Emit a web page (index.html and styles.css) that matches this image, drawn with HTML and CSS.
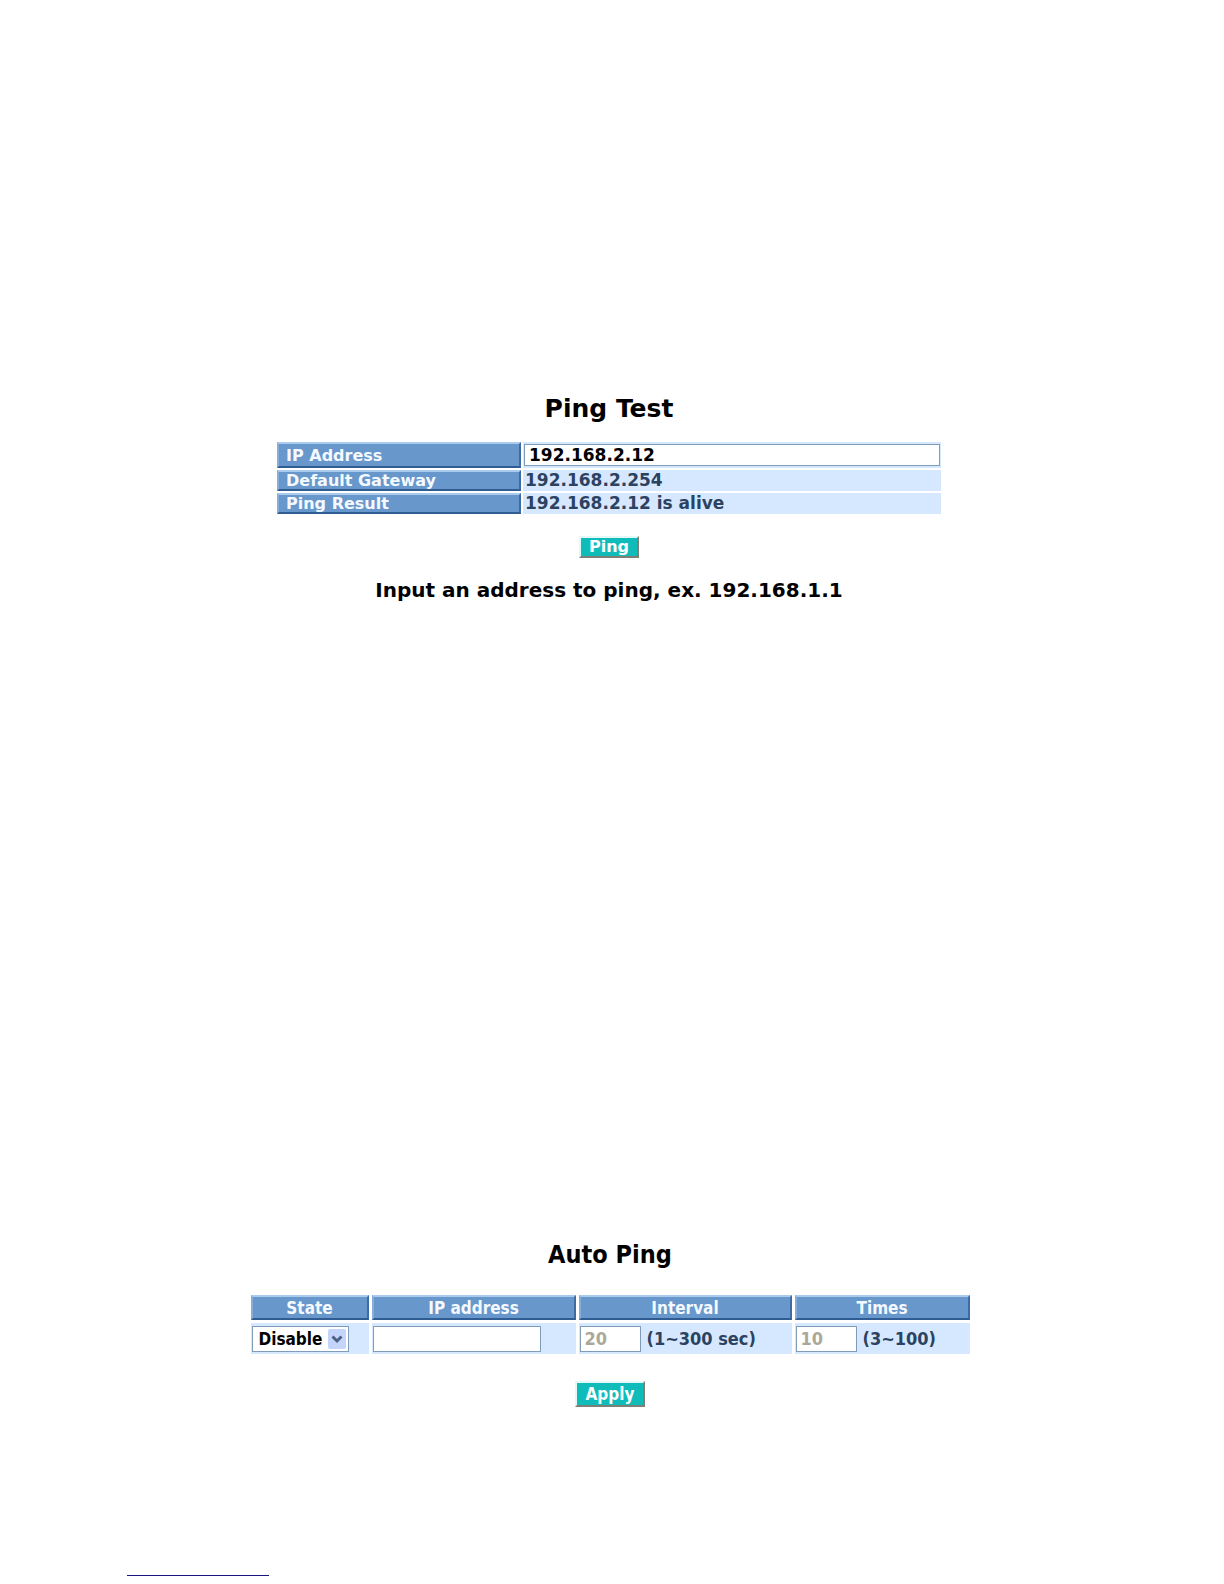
FILE: index.html
```
<!DOCTYPE html>
<html lang="en">
<head>
    <meta charset="UTF-8">
    <meta name="viewport" content="width=device-width, initial-scale=1.0">
    <title>Ping Test</title>
    <link rel="stylesheet" href="styles.css">
</head>
<body>
    <main>
        <form class="ping-test">
            <h1>Ping Test</h1>
            <table class="ping-table">
                <tr class="input-row">
                    <th scope="row"><label for="pingAddress">IP Address</label></th>
                    <td><input type="text" id="pingAddress" value="192.168.2.12"></td>
                </tr>
                <tr>
                    <th scope="row">Default Gateway</th>
                    <td>192.168.2.254</td>
                </tr>
                <tr>
                    <th scope="row">Ping Result</th>
                    <td>192.168.2.12 is alive</td>
                </tr>
            </table>
            <button type="button">Ping</button>
            <p class="hint">Input an address to ping, ex. 192.168.1.1</p>
        </form>

        <form class="auto-ping">
            <h2>Auto Ping</h2>
            <table class="auto-table">
                <thead>
                    <tr>
                        <th scope="col" class="col-state"><label for="state">State</label></th>
                        <th scope="col" class="col-address"><label for="autoAddress">IP address</label></th>
                        <th scope="col" class="col-interval"><label for="interval">Interval</label></th>
                        <th scope="col"><label for="times">Times</label></th>
                    </tr>
                </thead>
                <tbody>
                    <tr>
                        <td>
                            <div class="select-box">
                                <select id="state">
                                    <option>Disable</option>
                                    <option>Enable</option>
                                </select>
                                <svg class="arrow" viewBox="0 0 18 20" aria-hidden="true">
                                    <rect width="18" height="20" rx="2" fill="#c5d4fa"/>
                                    <path d="M4.500 7.500l4.500 4.500 4.500-4.500" fill="none" stroke="#4d6185" stroke-width="3"/>
                                </svg>
                            </div>
                        </td>
                        <td><input type="text" id="autoAddress" class="address"></td>
                        <td>
                            <div class="field">
                                <input type="text" id="interval" value="20" disabled>
                                <span>(1~300 sec)</span>
                            </div>
                        </td>
                        <td>
                            <div class="field">
                                <input type="text" id="times" value="10" disabled>
                                <span>(3~100)</span>
                            </div>
                        </td>
                    </tr>
                </tbody>
            </table>
            <button type="button">Apply</button>
        </form>
    </main>
    <footer>
        <hr>
    </footer>
</body>
</html>
```
FILE: styles.css
```
* {
    box-sizing: border-box;
}
body {
    margin: 0;
    padding: 395px 6px 0 0;
    background-color: #fff;
    color: #000;
    font-family: "DejaVu Sans", Verdana, sans-serif;
    font-weight: bold;
}
form {
    display: flex;
    flex-direction: column;
    align-items: center;
}
h1, h2 {
    margin: 0;
    font-size: 25px;
    line-height: 28px;
}
table {
    width: 100%;
    table-layout: fixed;
    border-collapse: separate;
}
th {
    padding: 0;
    background-color: #6797cb;
    border: 2px solid;
    border-color: #a9cbee #3d6ca5 #2f5c93 #86aedb;
    color: #f4f9ff;
}
td {
    padding: 0 2px;
    background-color: #d6e8ff;
    color: #2b4261;
}
input, select {
    display: block;
    margin: 0;
    border: 1px solid #7f9db9;
    border-radius: 0;
    background-color: #fff;
    color: #000;
    font: inherit;
}
input:disabled {
    color: #aca899;
}
button {
    padding: 0;
    background-color: #0fbcba;
    border: 2px solid;
    border-color: #e4f8f7 #7e8078 #7e8078 #e4f8f7;
    color: #fff;
    font: inherit;
}

/* Ping test */
.ping-table {
    max-width: 668px;
    margin-top: 17px;
    border-spacing: 2px;
    font-size: 17px;
    line-height: 17px;
}
.ping-table th {
    width: 244px;
    height: 21px;
    padding-left: 7px;
    font-size: 16px;
    text-align: left;
}
.ping-table td {
    height: 21px;
}
.ping-table .input-row th {
    height: 26px;
}
.ping-table .input-row td {
    padding: 0 1px;
}
.ping-table input {
    width: 100%;
    height: 22px;
    padding: 0 4px;
}
.ping-test button {
    width: 60px;
    height: 22px;
    margin-top: 20px;
    font-size: 16px;
    line-height: 16px;
}
.hint {
    margin: 20px 0 0;
    font-size: 20px;
    line-height: 24px;
}

/* Auto ping */
.auto-ping {
    margin-top: 639px;
    padding-left: 2px;
    font-family: "DejaVu Sans Condensed", "DejaVu Sans", Tahoma, sans-serif;
}
.auto-table {
    max-width: 725px;
    margin-top: 23px;
    border-spacing: 3px;
    font-size: 17px;
    line-height: 20px;
}
.auto-table th {
    height: 25px;
    text-align: center;
}
.auto-table td {
    height: 31px;
    padding: 0 1px;
}
.col-state {
    width: 118px;
}
.col-address {
    width: 204px;
}
.col-interval {
    width: 213px;
}
.auto-table input {
    width: 61px;
    height: 26px;
    padding: 0 4px;
}
.auto-table .address {
    width: 168px;
}
.field {
    display: flex;
    align-items: center;
    gap: 6px;
}
.field input, .field span {
    font-size: 18px;
    white-space: nowrap;
}
.select-box {
    position: relative;
    width: 97px;
}
.select-box select {
    width: 100%;
    height: 26px;
    padding: 0 20px 0 6px;
    appearance: none;
}
.arrow {
    position: absolute;
    top: 3px;
    right: 3px;
    width: 18px;
    height: 20px;
    pointer-events: none;
}
.auto-ping button {
    width: 70px;
    height: 26px;
    margin-top: 24px;
    font-size: 17px;
    line-height: 20px;
}

footer {
    padding: 168px 0 8px 127px;
}
hr {
    width: 142px;
    margin: 0;
    border: 0;
    border-top: 1px solid #17177f;
}
```
